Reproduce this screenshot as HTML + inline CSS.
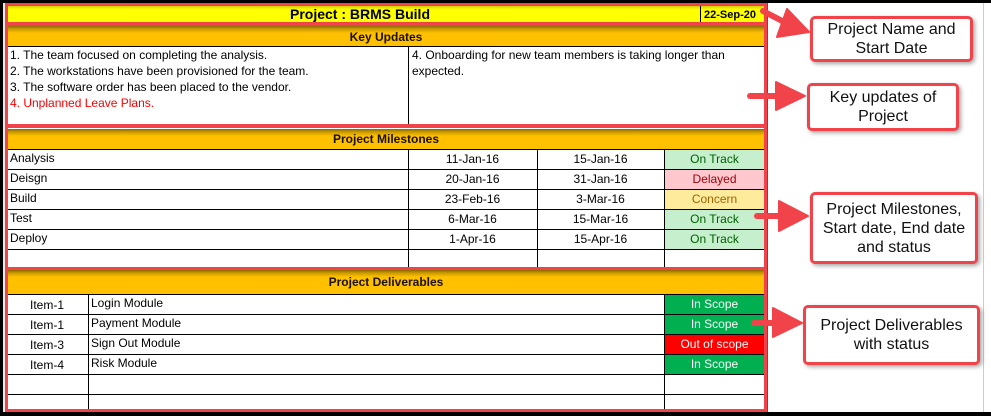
<!DOCTYPE html>
<html><head><meta charset="utf-8"><style>
*{margin:0;padding:0;box-sizing:border-box}
body{width:991px;height:416px;background:#000;position:relative;overflow:hidden;font-family:"Liberation Sans",Arial,sans-serif;font-size:12px;color:#000}
.a{position:absolute}
.hl{position:absolute;height:1px;background:#000}
.vl{position:absolute;width:1px;background:#000}
.red{position:absolute;border:3px solid #f0434a}
.hdr{position:absolute;background:linear-gradient(#8a6a00 0,#c99a00 3px,#ffc000 7px,#ffc000);font-weight:bold;font-size:12px;text-align:center;color:#1a1000}
.t{position:absolute;white-space:nowrap;line-height:14px}
.c{text-align:center}
.cb{position:absolute;background:#fff;border:3px solid #f0434a;border-radius:5px;box-shadow:2px 2px 4px rgba(0,0,0,.35);text-align:center;font-size:16px;line-height:19px;color:#111;display:flex;align-items:center;justify-content:center}
</style></head><body>
<div class="a" style="left:3px;top:3px;width:980px;height:409px;background:#fff"></div>
<div class="a" style="left:983px;top:3px;width:8px;height:409px;background:#fff;border-left:1px solid #ccc"></div>
<div class="a" style="left:3px;top:3px;width:3px;height:409px;background:#e8e8e8"></div>
<div class="vl" style="left:767px;top:3px;height:409px;background:#555"></div>

<!-- title -->
<div class="a" style="left:6px;top:4px;width:760px;height:20px;background:linear-gradient(#9a9a00 0,#e0e000 3px,#ffff00 6px,#ffff00)"></div>
<div class="t" style="left:250px;top:6px;width:220px;text-align:center;font-weight:bold;font-size:14px;line-height:16px">Project : BRMS Build</div>
<div class="vl" style="left:700px;top:5px;height:18px"></div>
<div class="t" style="left:704px;top:8px;font-weight:bold;font-size:11px">22-Sep-20</div>
<div class="red" style="left:5px;top:3px;width:762px;height:22px"></div>

<!-- key updates -->
<div class="hdr" style="left:6px;top:26px;width:760px;height:20px;line-height:22px">Key Updates</div>
<div class="hl" style="left:6px;top:46px;width:760px"></div>
<div class="vl" style="left:408px;top:46px;height:78px"></div>
<div class="t" style="left:10px;top:47px;line-height:16px">1. The team focused on completing the analysis.<br>2. The workstations have been provisioned for the team.<br>3. The software order has been placed to the vendor.<br><span style="color:#f00">4. Unplanned Leave Plans.</span></div>
<div class="t" style="left:412px;top:47px;line-height:16px">4. Onboarding for new team members is taking longer than<br>expected.</div>
<div class="red" style="left:5px;top:23px;width:762px;height:104px"></div>

<!-- milestones -->
<div class="hdr" style="left:6px;top:129px;width:760px;height:20px;line-height:21px">Project Milestones</div>
<div class="a" style="left:664px;top:149px;width:101px;height:20px;background:#c6efce"></div>
<div class="a" style="left:664px;top:169px;width:101px;height:20px;background:#ffc7ce"></div>
<div class="a" style="left:664px;top:189px;width:101px;height:20px;background:#ffeb9c"></div>
<div class="a" style="left:664px;top:209px;width:101px;height:20px;background:#c6efce"></div>
<div class="a" style="left:664px;top:229px;width:101px;height:20px;background:#c6efce"></div>
<div class="hl" style="left:6px;top:149px;width:760px"></div>
<div class="hl" style="left:6px;top:169px;width:760px"></div>
<div class="hl" style="left:6px;top:189px;width:760px"></div>
<div class="hl" style="left:6px;top:209px;width:760px"></div>
<div class="hl" style="left:6px;top:229px;width:760px"></div>
<div class="hl" style="left:6px;top:249px;width:760px"></div>
<div class="vl" style="left:408px;top:149px;height:118px"></div>
<div class="vl" style="left:537px;top:149px;height:118px"></div>
<div class="vl" style="left:664px;top:149px;height:118px"></div>
<div class="t" style="left:10px;top:148px;line-height:20px">Analysis<br>Deisgn<br>Build<br>Test<br>Deploy</div>
<div class="t c" style="left:408px;top:149px;width:129px;line-height:20px">11-Jan-16<br>20-Jan-16<br>23-Feb-16<br>6-Mar-16<br>1-Apr-16</div>
<div class="t c" style="left:537px;top:149px;width:127px;line-height:20px">15-Jan-16<br>31-Jan-16<br>3-Mar-16<br>15-Mar-16<br>15-Apr-16</div>
<div class="t c" style="left:664px;top:149px;width:101px;line-height:20px"><span style="color:#006100">On Track</span><br><span style="color:#9c0006">Delayed</span><br><span style="color:#9c6500">Concern</span><br><span style="color:#006100">On Track</span><br><span style="color:#006100">On Track</span></div>
<div class="red" style="left:5px;top:125px;width:762px;height:145px"></div>

<!-- deliverables -->
<div class="hdr" style="left:6px;top:270px;width:760px;height:24px;line-height:25px">Project Deliverables</div>
<div class="a" style="left:664px;top:294px;width:101px;height:20px;background:#00b050"></div>
<div class="a" style="left:664px;top:314px;width:101px;height:20px;background:#00b050"></div>
<div class="a" style="left:664px;top:334px;width:101px;height:20px;background:#ff0000"></div>
<div class="a" style="left:664px;top:354px;width:101px;height:20px;background:#00b050"></div>
<div class="hl" style="left:6px;top:294px;width:760px"></div>
<div class="hl" style="left:6px;top:314px;width:760px"></div>
<div class="hl" style="left:6px;top:334px;width:760px"></div>
<div class="hl" style="left:6px;top:354px;width:760px"></div>
<div class="hl" style="left:6px;top:374px;width:760px"></div>
<div class="hl" style="left:6px;top:394px;width:760px"></div>
<div class="vl" style="left:88px;top:294px;height:116px"></div>
<div class="vl" style="left:664px;top:294px;height:116px"></div>
<div class="t c" style="left:6px;top:295px;width:82px;line-height:20px">Item-1<br>Item-1<br>Item-3<br>Item-4</div>
<div class="t" style="left:91px;top:293px;line-height:20px">Login Module<br>Payment Module<br>Sign Out Module<br>Risk Module</div>
<div class="t c" style="left:664px;top:294px;width:101px;line-height:20px;color:#fff">In Scope<br>In Scope<br>Out of scope<br>In Scope</div>
<div class="red" style="left:5px;top:267px;width:762px;height:145px"></div>

<!-- arrows -->
<svg class="a" style="left:0;top:0" width="991" height="416">
<g fill="#f0434a" stroke="#f0434a" stroke-linecap="round" stroke-linejoin="round">
<line x1="763" y1="11" x2="788" y2="24" stroke-width="6"/>
<polygon points="787,9 809,32 777,37" stroke-width="2"/>
<line x1="750" y1="96" x2="780" y2="96" stroke-width="6"/>
<polygon points="776,82 805,96 776,110" stroke-width="2"/>
<line x1="757" y1="216" x2="782" y2="216" stroke-width="6"/>
<polygon points="779,201 808,216 779,231" stroke-width="2"/>
<line x1="754" y1="323" x2="776" y2="323" stroke-width="6"/>
<polygon points="773,308 802,323 773,337" stroke-width="2"/>
</g>
</svg>
<div class="cb" style="left:810px;top:16px;width:163px;height:46px">Project Name and<br>Start Date</div>
<div class="cb" style="left:807px;top:83px;width:152px;height:48px">Key updates of<br>Project</div>
<div class="cb" style="left:810px;top:192px;width:168px;height:72px">Project Milestones,<br>Start date, End date<br>and status</div>
<div class="cb" style="left:803px;top:305px;width:177px;height:60px">Project Deliverables<br>with status</div>
<div class="a" style="left:0;top:412px;width:991px;height:4px;background:#000"></div>
</body></html>
